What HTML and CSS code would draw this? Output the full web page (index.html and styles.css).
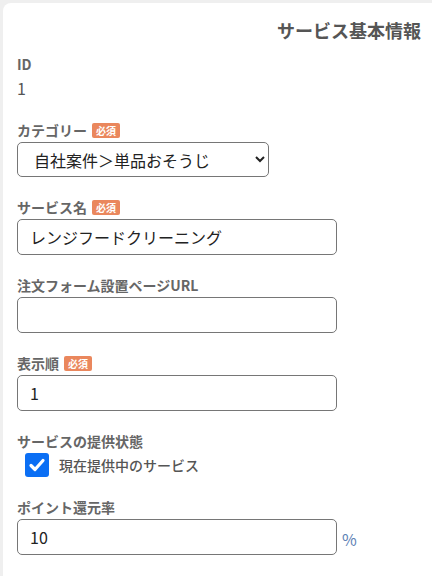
FILE: index.html
```html
<!DOCTYPE html>
<html lang="ja">
<head>
<meta charset="utf-8">
<link rel="stylesheet" href="styles.css">
</head>
<body>
<div class="card">
  <h2 class="title">サービス基本情報</h2>

  <div class="group group-id">
    <div class="label">ID</div>
    <div class="value">1</div>
  </div>

  <div class="group">
    <div class="label">カテゴリー<span class="badge">必須</span></div>
    <select class="select">
      <option>自社案件＞単品おそうじ</option>
    </select>
  </div>

  <div class="group">
    <div class="label">サービス名<span class="badge">必須</span></div>
    <input class="input" type="text" value="レンジフードクリーニング">
  </div>

  <div class="group">
    <div class="label">注文フォーム設置ページURL</div>
    <input class="input" type="text" value="">
  </div>

  <div class="group">
    <div class="label">表示順<span class="badge">必須</span></div>
    <input class="input" type="text" value="1">
  </div>

  <div class="group">
    <div class="label">サービスの提供状態</div>
    <label class="check-row">
      <span class="checkbox">
        <svg viewBox="0 0 24 24" width="24" height="24"><path d="M6 12.5l4 4 8-9" fill="none" stroke="#fff" stroke-width="3.2" stroke-linecap="round" stroke-linejoin="round"/></svg>
      </span>
      <span class="check-text">現在提供中のサービス</span>
    </label>
  </div>

  <div class="group">
    <div class="label">ポイント還元率</div>
    <div class="input-row">
      <input class="input" type="text" value="10">
      <span class="unit">%</span>
    </div>
  </div>
</div>
</body>
</html>
```

FILE: styles.css
```css
html, body {
  margin: 0;
  padding: 0;
}
body {
  background: #efefef;
  padding: 3px 0 0 3px;
  font-family: "Noto Sans CJK JP", "Noto Sans", sans-serif;
  color: #555;
  height: 573px;
  overflow: hidden;
}
.card {
  background: #fff;
  border-top-left-radius: 8px;
  padding: 14px 11px 20px 14px;
  min-height: 560px;
}
.title {
  margin: 0;
  text-align: right;
  font-size: 18px;
  line-height: 26px;
  font-weight: 700;
  color: #555;
}
.group {
  margin-top: 20px;
}
.group-id {
  margin-top: 11px;
}
.label {
  display: flex;
  align-items: center;
  font-size: 14px;
  line-height: 20px;
  font-weight: 700;
  color: #666;
  margin-bottom: 2px;
}
.badge {
  display: inline-block;
  margin-left: 5px;
  background: #ea875d;
  color: #fff;
  font-size: 10px;
  line-height: 15px;
  height: 15px;
  padding: 0 4px;
  border-radius: 2px;
  font-weight: 700;
}
.value {
  font-size: 16px;
  line-height: 24px;
  color: #555;
}
.input, .select {
  display: block;
  box-sizing: border-box;
  height: 36px;
  border: 1px solid #767676;
  border-radius: 5px;
  font-family: "Noto Sans CJK JP", "Noto Sans", sans-serif;
  font-size: 16px;
  color: #222;
  background: #fff;
  outline: none;
}
.input {
  width: 320px;
  padding: 0 12px;
}
.select {
  width: 252px;
  height: 35px;
  margin-top: 2px;
  padding: 0 8px 0 12px;
}
.check-row {
  display: flex;
  align-items: center;
  gap: 10px;
  height: 24px;
  margin-left: 8px;
}
.checkbox {
  display: block;
  width: 24px;
  height: 24px;
  border-radius: 3px;
  background: #0b6ff4;
}
.checkbox svg {
  display: block;
}
.check-text {
  font-size: 14px;
  font-weight: 500;
  color: #555;
}
.input-row {
  display: flex;
  align-items: center;
  gap: 5px;
  margin-top: 1px;
}
.unit {
  font-size: 16px;
  color: #5d82b5;
  padding-top: 4px;
}
```
